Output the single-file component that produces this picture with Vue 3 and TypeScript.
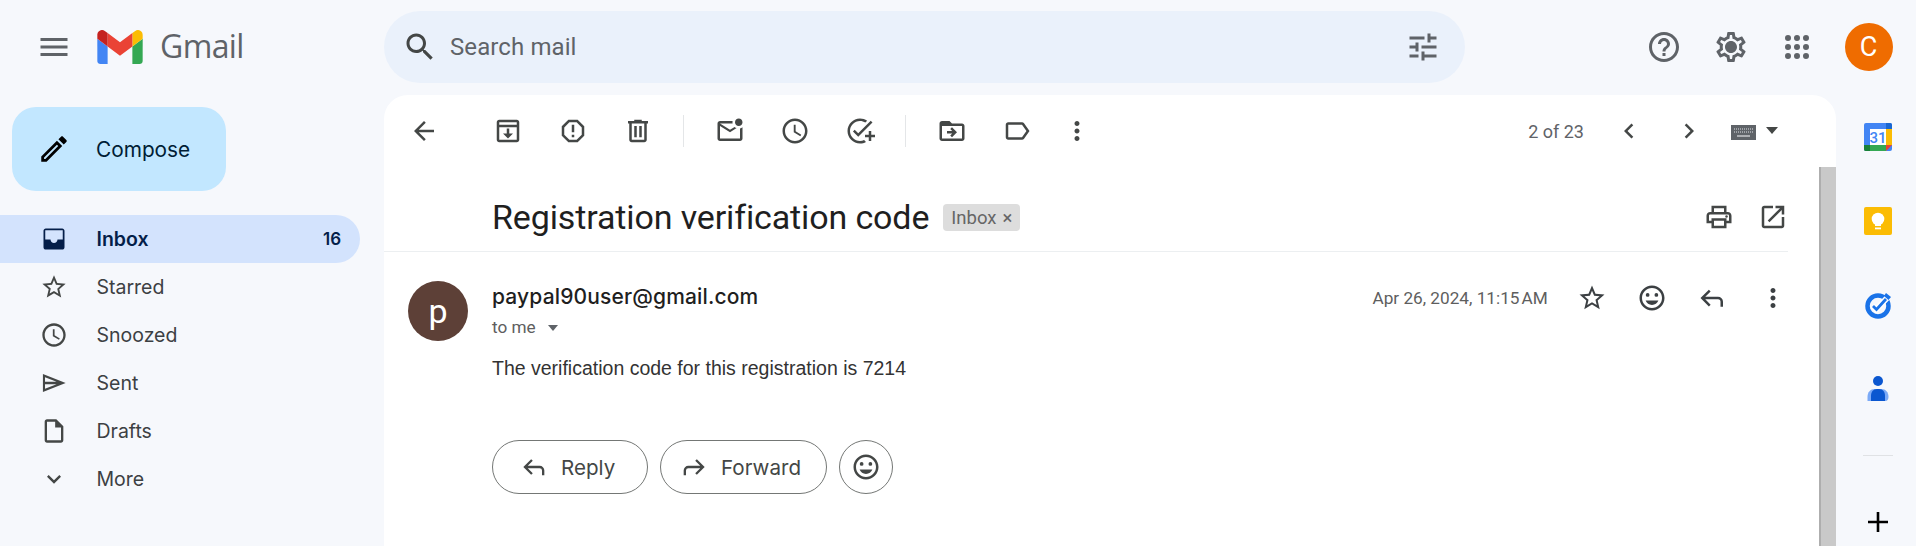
<script setup lang="ts">
const p: Record<string, string> = {
  menu: 'M3 18h18v-2H3v2zm0-5h18v-2H3v2zm0-7v2h18V6H3z',
  search: 'M15.5 14h-.79l-.28-.27C15.41 12.59 16 11.11 16 9.5 16 5.91 13.09 3 9.5 3S3 5.91 3 9.5 5.91 16 9.5 16c1.61 0 3.09-.59 4.23-1.57l.27.28v.79l5 4.99L20.49 19l-4.99-5zm-6 0C7.01 14 5 11.99 5 9.5S7.01 5 9.5 5 14 7.01 14 9.5 11.99 14 9.5 14z',
  tune: 'M3 17v2h6v-2H3zM3 5v2h10V5H3zm10 16v-2h8v-2h-8v-2h-2v6h2zM7 9v2H3v2h4v2h2V9H7zm14 4v-2H11v2h10zm-6-4h2V7h4V5h-4V3h-2v6z',
  help: 'M11 18h2v-2h-2v2zm1-16C6.48 2 2 6.48 2 12s4.48 10 10 10 10-4.48 10-10S17.52 2 12 2zm0 18c-4.41 0-8-3.59-8-8s3.59-8 8-8 8 3.59 8 8-3.59 8-8 8zm0-14c-2.21 0-4 1.79-4 4h2c0-1.1.9-2 2-2s2 .9 2 2c0 2-3 1.75-3 5h2c0-2.25 3-2.5 3-5 0-2.21-1.79-4-4-4z',
  gear: 'M19.43 12.98c.04-.32.07-.64.07-.98 0-.34-.03-.66-.07-.98l2.11-1.65c.19-.15.24-.42.12-.64l-2-3.46c-.09-.16-.26-.25-.44-.25-.06 0-.12.01-.17.03l-2.49 1c-.52-.4-1.08-.73-1.69-.98l-.38-2.65C14.46 2.18 14.25 2 14 2h-4c-.25 0-.46.18-.49.42l-.38 2.65c-.61.25-1.17.59-1.69.98l-2.49-1c-.06-.02-.12-.03-.18-.03-.17 0-.34.09-.43.25l-2 3.46c-.13.22-.07.49.12.64l2.11 1.65c-.04.32-.07.65-.07.98 0 .33.03.66.07.98l-2.11 1.65c-.19.15-.24.42-.12.64l2 3.46c.09.16.26.25.44.25.06 0 .12-.01.17-.03l2.49-1c.52.4 1.08.73 1.69.98l.38 2.65c.03.24.24.42.49.42h4c.25 0 .46-.18.49-.42l.38-2.65c.61-.25 1.17-.59 1.69-.98l2.49 1c.06.02.12.03.18.03.17 0 .34-.09.43-.25l2-3.46c.12-.22.07-.49-.12-.64l-2.11-1.65zm-1.98-1.71c.04.31.05.52.05.73 0 .21-.02.43-.05.73l-.14 1.13.89.7 1.08.84-.7 1.21-1.27-.51-1.04-.42-.9.68c-.43.32-.84.56-1.25.73l-1.06.43-.16 1.13-.2 1.35h-1.4l-.19-1.35-.16-1.13-1.06-.43c-.43-.18-.83-.41-1.23-.71l-.91-.7-1.06.43-1.27.51-.7-1.21 1.08-.84.89-.7-.14-1.13c-.03-.31-.05-.54-.05-.74s.02-.43.05-.73l.14-1.13-.89-.7-1.08-.84.7-1.21 1.27.51 1.04.42.9-.68c.43-.32.84-.56 1.25-.73l1.06-.43.16-1.13.2-1.35h1.39l.19 1.35.16 1.13 1.06.43c.43.18.83.41 1.23.71l.91.7 1.06-.43 1.27-.51.7 1.21-1.07.85-.89.7.14 1.13zM12 8c-2.21 0-4 1.79-4 4s1.79 4 4 4 4-1.79 4-4-1.79-4-4-4z',
  apps: 'M6 4a2 2 0 100 4 2 2 0 000-4zm6 0a2 2 0 100 4 2 2 0 000-4zm6 0a2 2 0 100 4 2 2 0 000-4zM6 10a2 2 0 100 4 2 2 0 000-4zm6 0a2 2 0 100 4 2 2 0 000-4zm6 0a2 2 0 100 4 2 2 0 000-4zM6 16a2 2 0 100 4 2 2 0 000-4zm6 0a2 2 0 100 4 2 2 0 000-4zm6 0a2 2 0 100 4 2 2 0 000-4z',
  edit: 'M3 17.25V21h3.75L17.81 9.94l-3.75-3.75L3 17.25zM5.92 19H5v-.92l9.06-9.06.92.92L5.92 19zM20.71 5.63l-2.34-2.34c-.2-.2-.45-.29-.71-.29s-.51.1-.7.29l-1.83 1.83 3.75 3.75 1.83-1.83c.39-.39.39-1.02 0-1.41z',
  inbox: 'M19 3H5c-1.1 0-2 .9-2 2v14c0 1.1.9 2 2 2h14c1.1 0 2-.9 2-2V5c0-1.1-.9-2-2-2zM4.500 4.500h15v8h-4.500c0 1.66-1.34 3-3 3s-3-1.34-3-3H4.500z',
  star: 'M22 9.24l-7.19-.62L12 2 9.19 8.63 2 9.24l5.46 4.73L5.82 21 12 17.27 18.18 21l-1.63-7.03L22 9.24zM12 15.4l-3.76 2.27 1-4.28-3.32-2.88 4.38-.38L12 6.1l1.71 4.04 4.38.38-3.32 2.88 1 4.28L12 15.4z',
  clock: 'M11.99 2C6.47 2 2 6.48 2 12s4.47 10 9.99 10C17.52 22 22 17.52 22 12S17.52 2 11.99 2zM12 20c-4.42 0-8-3.58-8-8s3.58-8 8-8 8 3.58 8 8-3.58 8-8 8zm.5-13H11v6l5.25 3.15.75-1.23-4.5-2.67z',
  send: 'M2.500 4.200v15.600L22 12zM4.300 7l9.900 4H4.300zM4.300 13h9.900l-9.900 4z',
  draft: 'M14 2H6c-1.1 0-2 .9-2 2v16c0 1.1.9 2 2 2h12c1.1 0 2-.9 2-2V8l-6-6zm4 18H6V4h7v5h5v11z',
  expand: 'M16.59 8.59L12 13.17 7.41 8.59 6 10l6 6 6-6z',
  back: 'M20 11H7.83l5.59-5.59L12 4l-8 8 8 8 1.41-1.41L7.83 13H20v-2z',
  archive: 'M19 3H5c-1.1 0-2 .9-2 2v14c0 1.1.9 2 2 2h14c1.1 0 2-.9 2-2V5c0-1.1-.9-2-2-2zm0 2v2H5V5h14zM5 19V9h14v10H5zm8-9h-2v4H8l4 4 4-4h-3v-4z',
  report: 'M15.73 3H8.27L3 8.27v7.46L8.27 21h7.46L21 15.73V8.27L15.73 3zM19 14.9L14.9 19H9.1L5 14.9V9.1L9.1 5h5.8L19 9.1v5.8zM11 7h2v6h-2zM11 15h2v2h-2z',
  trash: 'M15 4V3H9v1H4v2h1v13c0 1.1.9 2 2 2h10c1.1 0 2-.9 2-2V6h1V4h-5zm2 15H7V6h10v13zM9 8h2v9H9zm4 0h2v9h-2z',
  unread: 'M22 8.98V18c0 1.1-.9 2-2 2H4c-1.1 0-2-.9-2-2V6c0-1.1.9-2 2-2h10.1c-.06.32-.1.66-.1 1 0 .34.04.68.1 1H4l8 5 3.67-2.29c.47.43 1.02.76 1.63.98L12 13 4 8v10h16V9.9c.74-.15 1.42-.48 2-.92zM16 5c0 1.66 1.34 3 3 3s3-1.34 3-3-1.34-3-3-3-3 1.34-3 3z',
  task: 'M22 5.18L10.59 16.6l-4.24-4.24 1.41-1.41 2.83 2.83 10-10L22 5.18zM12 20c-4.41 0-8-3.59-8-8s3.59-8 8-8c1.57 0 3.04.46 4.28 1.25l1.45-1.45C16.1 2.67 14.13 2 12 2 6.48 2 2 6.48 2 12s4.48 10 10 10c1.73 0 3.36-.44 4.78-1.22l-1.5-1.5c-1 .46-2.11.72-3.28.72zm7-5h-3v2h3v3h2v-3h3v-2h-3v-3h-2v3z',
  move: 'M20 6h-8l-2-2H4c-1.1 0-1.99.9-1.99 2L2 18c0 1.1.9 2 2 2h16c1.1 0 2-.9 2-2V8c0-1.1-.9-2-2-2zm0 12H4V8h16v10zM12 9l-1.41 1.41L12.17 12H8v2h4.17l-1.58 1.59L12 17l4-4-4-4z',
  label: 'M17.63 5.84C17.27 5.33 16.67 5 16 5L5 5.01C3.9 5.01 3 5.9 3 7v10c0 1.1.9 1.99 2 1.99L16 19c.67 0 1.27-.33 1.63-.84L22 12l-4.37-6.16zM16 17H5V7h11l3.55 5L16 17z',
  more: 'M12 8c1.1 0 2-.9 2-2s-.9-2-2-2-2 .9-2 2 .9 2 2 2zm0 2c-1.1 0-2 .9-2 2s.9 2 2 2 2-.9 2-2-.9-2-2-2zm0 6c-1.1 0-2 .9-2 2s.9 2 2 2 2-.9 2-2-.9-2-2-2z',
  prev: 'M15.41 7.41L14 6l-6 6 6 6 1.41-1.41L10.83 12z',
  next: 'M10 6L8.59 7.41 13.17 12l-4.58 4.59L10 18l6-6z',
  print: 'M19 8h-1V3H6v5H5c-1.66 0-3 1.34-3 3v6h4v4h12v-4h4v-6c0-1.66-1.34-3-3-3zM8 5h8v3H8V5zm8 12v2H8v-4h8v2zm2-2v-2H6v2H4v-4c0-.55.45-1 1-1h14c.55 0 1 .45 1 1v4h-2z',
  open: 'M19 19H5V5h7V3H5c-1.11 0-2 .9-2 2v14c0 1.1.89 2 2 2h14c1.1 0 2-.9 2-2v-7h-2v7zM14 3v2h3.59l-9.83 9.83 1.41 1.41L19 6.41V10h2V3h-7z',
  emoji: 'M11.99 2C6.47 2 2 6.48 2 12s4.47 10 9.99 10C17.52 22 22 17.52 22 12S17.52 2 11.99 2zM12 20c-4.42 0-8-3.58-8-8s3.58-8 8-8 8 3.58 8 8-3.58 8-8 8zM15.5 11a1.5 1.5 0 100-3 1.5 1.5 0 000 3zM8.5 11a1.5 1.5 0 100-3 1.5 1.5 0 000 3zM12 17.5c2.33 0 4.3-1.46 5.11-3.5H6.89c.8 2.04 2.78 3.5 5.11 3.5z',
  reply: 'M20 19v-4a4 4 0 00-4-4H5.8l4.3-4.3L8.7 5.3 2 12l6.7 6.7 1.4-1.4L5.8 13H16a2 2 0 012 2v4z',
  forward: 'M4 19v-4a4 4 0 014-4h10.2l-4.3-4.3 1.4-1.4L22 12l-6.700 6.700-1.400-1.400 4.300-4.300H8a2 2 0 00-2 2v4z',
}

const navItems = [
  { name: 'Inbox', icon: 'inbox', count: '16', active: true },
  { name: 'Starred', icon: 'star' },
  { name: 'Snoozed', icon: 'clock' },
  { name: 'Sent', icon: 'send' },
  { name: 'Drafts', icon: 'draft' },
  { name: 'More', icon: 'expand' },
]

const toolGroups = [
  ['archive', 'report', 'trash'],
  ['unread', 'clock', 'task'],
  ['move', 'label', 'more'],
]
</script>

<template>
  <div class="gmail">
    <header class="topbar">
      <div class="brand">
        <svg class="menu-icon" viewBox="0 0 24 24"><path :d="p.menu" /></svg>
        <svg class="logo" viewBox="52 42 88 66">
          <path fill="#4285f4" d="M58 108h14V74L52 59v43c0 3.32 2.69 6 6 6" />
          <path fill="#34a853" d="M120 108h14c3.32 0 6-2.69 6-6V59l-20 15" />
          <path fill="#fbbc04" d="M120 48v26l20-15v-8c0-7.42-8.47-11.65-14.4-7.2" />
          <path fill="#ea4335" d="M72 74V48l24 18 24-18v26L96 92" />
          <path fill="#c5221f" d="M52 51v8l20 15V48l-5.6-4.2c-5.94-4.45-14.4-.22-14.4 7.2" />
        </svg>
        <span class="wordmark">Gmail</span>
      </div>
      <div class="search">
        <svg class="search-icon" viewBox="0 0 24 24"><path :d="p.search" /></svg>
        <span class="search-text">Search mail</span>
        <svg class="search-icon tune" viewBox="0 0 24 24"><path :d="p.tune" /></svg>
      </div>
      <div class="top-actions">
        <svg class="top-icon" viewBox="0 0 24 24"><path :d="p.help" /></svg>
        <svg class="top-icon" viewBox="0 0 24 24"><path :d="p.gear" /></svg>
        <svg class="top-icon" viewBox="0 0 24 24"><path :d="p.apps" /></svg>
        <div class="user">C</div>
      </div>
    </header>

    <div class="body">
      <aside class="sidebar">
        <div class="compose">
          <svg viewBox="0 0 24 24"><path :d="p.edit" /></svg>
          <span>Compose</span>
        </div>
        <nav class="nav">
          <div v-for="item in navItems" :key="item.name" class="nav-row" :class="{ active: item.active }">
            <svg viewBox="0 0 24 24"><path :d="p[item.icon]" /></svg>
            <span class="nav-name">{{ item.name }}</span>
            <span v-if="item.count" class="nav-count">{{ item.count }}</span>
          </div>
        </nav>
      </aside>

      <main class="card">
        <div class="toolbar">
          <span class="tool back"><svg viewBox="0 0 24 24"><path :d="p.back" /></svg></span>
          <div class="tool-groups">
            <div v-for="(group, i) in toolGroups" :key="i" class="tool-group">
              <span v-for="name in group" :key="name" class="tool">
                <svg viewBox="0 0 24 24"><path :d="p[name]" /></svg>
              </span>
            </div>
          </div>
          <div class="pager">
            <span class="pager-text">2 of 23</span>
            <span class="pager-btn"><svg viewBox="0 0 24 24"><path :d="p.prev" /></svg></span>
            <span class="pager-btn"><svg viewBox="0 0 24 24"><path :d="p.next" /></svg></span>
            <svg class="keyboard" viewBox="0 0 25 15">
              <rect width="25" height="15" fill="#5f6368" />
              <path d="M3 4h19M3 7h19" stroke="#dfe1e5" stroke-width="1.200" stroke-dasharray="1 1" />
              <path d="M6 11h13" stroke="#dfe1e5" stroke-width="1.200" />
            </svg>
            <span class="caret big"></span>
          </div>
        </div>

        <div class="thread-wrap">
          <div class="thread">
            <div class="subject">
              <h1>Registration verification code</h1>
              <span class="chip">Inbox <b>×</b></span>
              <div class="subject-tools">
                <span class="tool narrow"><svg viewBox="0 0 24 24"><path :d="p.print" /><circle cx="18" cy="11.500" r="1" /></svg></span>
                <span class="tool narrow"><svg viewBox="0 0 24 24"><path :d="p.open" /></svg></span>
              </div>
            </div>

            <div class="message">
              <div class="avatar">p</div>
              <div class="message-main">
                <div class="message-head">
                  <div>
                    <div class="sender">paypal90user@gmail.com</div>
                    <div class="to">to me <span class="caret"></span></div>
                  </div>
                  <div class="meta">
                    <span class="date">Apr 26, 2024, 11:15&#8239;AM</span>
                    <span class="tool dark"><svg viewBox="0 0 24 24"><path :d="p.star" /></svg></span>
                    <span class="tool dark"><svg viewBox="0 0 24 24"><path :d="p.emoji" /></svg></span>
                    <span class="tool dark"><svg viewBox="0 0 24 24"><path :d="p.reply" /></svg></span>
                    <span class="tool dark"><svg viewBox="0 0 24 24"><path :d="p.more" /></svg></span>
                  </div>
                </div>
                <p class="text">The verification code for this registration is 7214</p>
                <div class="actions">
                  <div class="pill reply"><svg viewBox="0 0 24 24"><path :d="p.reply" /></svg>Reply</div>
                  <div class="pill forward"><svg viewBox="0 0 24 24"><path :d="p.forward" /></svg>Forward</div>
                  <div class="pill round"><svg viewBox="0 0 24 24"><path :d="p.emoji" /></svg></div>
                </div>
              </div>
            </div>
          </div>
          <div class="scrollbar"></div>
        </div>
      </main>

      <aside class="rail">
        <svg class="rail-icon" viewBox="0 0 28 28">
          <rect width="28" height="28" rx="2" fill="#4285f4" />
          <path d="M22 0h4a2 2 0 012 2v4h-6z" fill="#1967d2" />
          <path d="M22 6h6v16h-6z" fill="#fbbc04" />
          <path d="M0 22h22v6H2a2 2 0 01-2-2z" fill="#34a853" />
          <path d="M0 22h6v6H2a2 2 0 01-2-2z" fill="#188038" />
          <path d="M22 22h6l-6 6z" fill="#ea4335" />
          <rect x="6" y="6" width="16" height="16" fill="#fff" />
          <text x="14" y="19.500" text-anchor="middle" class="cal-text">31</text>
        </svg>
        <svg class="rail-icon keep" viewBox="0 0 28 28">
          <rect width="28" height="28" rx="2" fill="#fbbc04" />
          <circle cx="14" cy="12" r="6.300" fill="#fff" />
          <path d="M11 16h6v3h-6z" fill="#fff" />
          <path d="M11 20.500h6v1.800h-6z" fill="#fff" />
        </svg>
        <svg class="rail-icon tasks" viewBox="0 0 28 28">
          <circle cx="14" cy="15" r="10.500" fill="none" stroke="#1a73e8" stroke-width="4.500" />
          <path d="M8.500 15l3.500 3.500L24 6" fill="none" stroke="#fff" stroke-width="6" />
          <path d="M9 15l3.500 3.500L22 8" fill="none" stroke="#1a73e8" stroke-width="2.800" />
          <path d="M22 2l5 4-2.500 3-4.500-4z" fill="#1a73e8" />
        </svg>
        <svg class="contacts" viewBox="0 0 24 26">
          <circle cx="12" cy="5" r="5" fill="#0b57d0" />
          <path d="M1.500 25v-4c0-5 3-8 7-8h7c4 0 7 3 7 8 0 2-1 4-3 4z" fill="#7baaf7" />
          <path d="M5 25v-5c0-4 2-7 6-7h2c4 0 6 3 6 7v5z" fill="#0b57d0" />
        </svg>
        <div class="rail-divider"></div>
        <svg class="rail-plus" viewBox="0 0 24 24"><path d="M2 10.700h8.700V2h2.600v8.700H22v2.600h-8.700V22h-2.600v-8.700H2z" /></svg>
      </aside>
    </div>
  </div>
</template>

<style>
html, body { margin: 0; overflow: hidden; background: #f6f8fc; }
</style>

<style scoped>
.gmail {
  width: 1916px;
  height: 546px;
  display: flex;
  flex-direction: column;
  background: #f6f8fc;
  font-family: Roboto, "Noto Sans", sans-serif;
  color: #444746;
  overflow: hidden;
}
svg { display: block; fill: currentColor; flex: none; }

.topbar { height: 95px; flex: none; display: flex; align-items: center; padding-bottom: 1px; box-sizing: border-box; }
.brand { width: 384px; display: flex; align-items: center; padding-left: 36px; box-sizing: border-box; color: #5f6368; }
.menu-icon { width: 36px; height: 36px; }
.logo { width: 46px; height: 34px; margin-left: 25px; }
.wordmark { font-family: "Open Sans", sans-serif; font-size: 32px; margin-left: 17px; letter-spacing: -0.6px; line-height: 36px; margin-top: -2px; }
.search {
  width: 1081px;
  height: 72px;
  border-radius: 36px;
  background: #eaf1fb;
  display: flex;
  align-items: center;
  padding: 0 24px 0 18px;
  box-sizing: border-box;
}
.search-icon { width: 36px; height: 36px; color: #444746; }
.tune { margin-left: auto; color: #5f6368; }
.search-text { font-size: 24px; margin-left: 12px; color: #5f6368; letter-spacing: 0.1px; }
.top-actions { flex: 1; display: flex; align-items: center; padding-left: 181px; color: #5f6368; }
.top-icon { width: 36px; height: 36px; margin-right: 30.500px; }
.user {
  width: 48px;
  height: 48px;
  margin-left: -1px;
  border-radius: 50%;
  background: #ef6c00;
  color: #fff;
  font-size: 27px;
  display: flex;
  align-items: center;
  justify-content: center;
}

.body { flex: 1; display: flex; min-height: 0; }
.sidebar { width: 384px; flex: none; }
.compose {
  width: 214px;
  height: 84px;
  margin: 12px 0 24px 12px;
  border-radius: 24px;
  background: #c2e7ff;
  display: flex;
  align-items: center;
  color: #001d35;
  font-size: 20.800px;
  font-family: Inter, sans-serif;
}
.compose svg { width: 34px; height: 34px; margin-left: 25px; color: #000; }
.compose span { margin-left: 25px; }
.nav-row {
  width: 360px;
  height: 48px;
  display: flex;
  align-items: center;
  border-radius: 0 24px 24px 0;
  font-size: 19.500px;
  font-family: Inter, sans-serif;
  color: #3c4043;
  box-sizing: border-box;
  padding: 0 19px 0 40px;
}
.nav-row svg { width: 28px; height: 28px; color: #444746; }
.nav-name { margin-left: 28.500px; }
.nav-row.active { background: #d3e3fd; color: #041e49; font-weight: 600; }
.nav-row.active svg { color: #041e49; }
.nav-count { margin-left: auto; font-size: 17px; }

.card {
  width: 1452px;
  flex: none;
  background: #fff;
  border-radius: 24px 24px 0 0;
  display: flex;
  flex-direction: column;
  min-height: 0;
}
.toolbar { height: 72px; flex: none; display: flex; align-items: center; padding-left: 7px; }
.tool { width: 65px; height: 40px; display: flex; align-items: center; justify-content: center; color: #444746; flex: none; }
.tool svg { width: 30px; height: 30px; }
.tool.narrow { width: 54px; }
.tool.dark { color: #3c4043; }
.tool-groups { display: flex; margin-left: 19px; }
.tool-group { display: flex; align-items: center; padding-right: 14px; margin-right: 13px; position: relative; }
.tool-group:not(:last-child)::after {
  content: '';
  position: absolute;
  right: 0;
  top: 4px;
  bottom: 4px;
  width: 1px;
  background: #e4e6e8;
}
.tool-group:last-child .tool:last-child { width: 60px; margin-left: -2px; }
.pager { margin-left: auto; display: flex; align-items: center; padding-right: 58px; color: #5f6368; }
.pager-text { font-size: 18px; margin-right: 15px; }
.pager-btn { width: 60px; display: flex; justify-content: center; color: #444746; }
.pager-btn svg { width: 30px; height: 30px; }
.keyboard { width: 25px; height: 15px; margin: 2px 0 0 12px; }
.caret { display: inline-block; width: 0; height: 0; border: 5px solid transparent; border-top: 6px solid #5f6368; border-bottom: 0; vertical-align: middle; }
.caret.big { border-width: 7px 6.500px 0; border-top-color: #444746; margin-left: 10px; margin-bottom: 2px; }

.thread-wrap { flex: 1; display: flex; min-height: 0; }
.thread { flex: 1; padding-right: 31px; min-width: 0; }
.scrollbar { width: 17px; flex: none; background: #c9c9c9; border-left: 2px solid #aeaeae; box-sizing: border-box; }
.subject {
  height: 85px;
  box-sizing: border-box;
  display: flex;
  align-items: center;
  padding: 16px 0 0 108px;
  border-bottom: 1px solid #eceff1;
}
.subject h1 { margin: 0; font-weight: 400; font-size: 34px; color: #1f1f1f; letter-spacing: -0.13px; }
.chip {
  margin: 1px 0 0 14px;
  height: 27px;
  padding: 0 8px;
  background: #dddddd;
  color: #666;
  border-radius: 4px;
  font-size: 18.500px;
  display: flex;
  align-items: center;
}
.chip b { font-weight: 400; margin-left: 6px; }
.subject-tools { margin: 0 -12px 0 auto; display: flex; }

.message { display: flex; padding: 34px 0 0 24px; }
.avatar {
  width: 60px;
  height: 60px;
  border-radius: 50%;
  background: #5d4037;
  color: #fff;
  font-size: 34px;
  display: flex;
  align-items: center;
  justify-content: center;
  flex: none;
  margin-top: -5px;
}
.message-main { flex: 1; margin-left: 24px; min-width: 0; }
.message-head { display: flex; justify-content: space-between; }
.sender { font-size: 21px; font-family: Inter, sans-serif; font-weight: 500; color: #1f1f1f; line-height: 24px; margin-top: -1px; letter-spacing: 0.15px; }
.to { font-size: 17.200px; color: #5e5e5e; line-height: 24px; margin-top: 6px; }
.to .caret { margin-left: 8px; }
.meta { display: flex; align-items: center; height: 24px; color: #5e5e5e; margin-right: -15px; }
.date { font-size: 17.200px; margin-right: 14px; }
.meta .tool { width: 60.300px; }
.text { margin: 17px 0 0; font-family: "Liberation Sans", Arial, sans-serif; font-size: 19.500px; line-height: 24px; color: #333; }
.actions { display: flex; gap: 12px; margin-top: 60px; }
.pill {
  height: 54px;
  border: 1px solid #747775;
  border-radius: 27px;
  box-sizing: border-box;
  display: flex;
  align-items: center;
  font-size: 20.600px;
  color: #444746;
  font-family: Inter, sans-serif;
}
.pill svg { width: 28px; height: 28px; margin-right: 14px; }
.pill.reply { width: 156px; padding-left: 28px; }
.pill.reply svg { margin-right: 12px; }
.pill.forward { width: 167px; padding-left: 18px; }
.pill.round { width: 54px; justify-content: center; }
.pill.round svg { margin: 0; width: 30px; height: 30px; }

.rail { flex: 1; display: flex; flex-direction: column; align-items: center; padding-top: 28px; padding-left: 4px; box-sizing: border-box; }
.rail-icon { width: 28px; height: 28px; }
.keep { margin-top: 56px; }
.tasks { margin-top: 56px; }
.contacts { margin-top: 57px; width: 24px; height: 26px; }
.rail-divider { width: 30px; height: 1px; background: #e0e2e5; margin-top: 53px; }
.rail-plus { width: 24px; height: 24px; margin-top: 54px; color: #000; }
.cal-text { font-size: 15px; fill: #4285f4; font-family: Roboto, sans-serif; font-weight: 500; }
</style>
